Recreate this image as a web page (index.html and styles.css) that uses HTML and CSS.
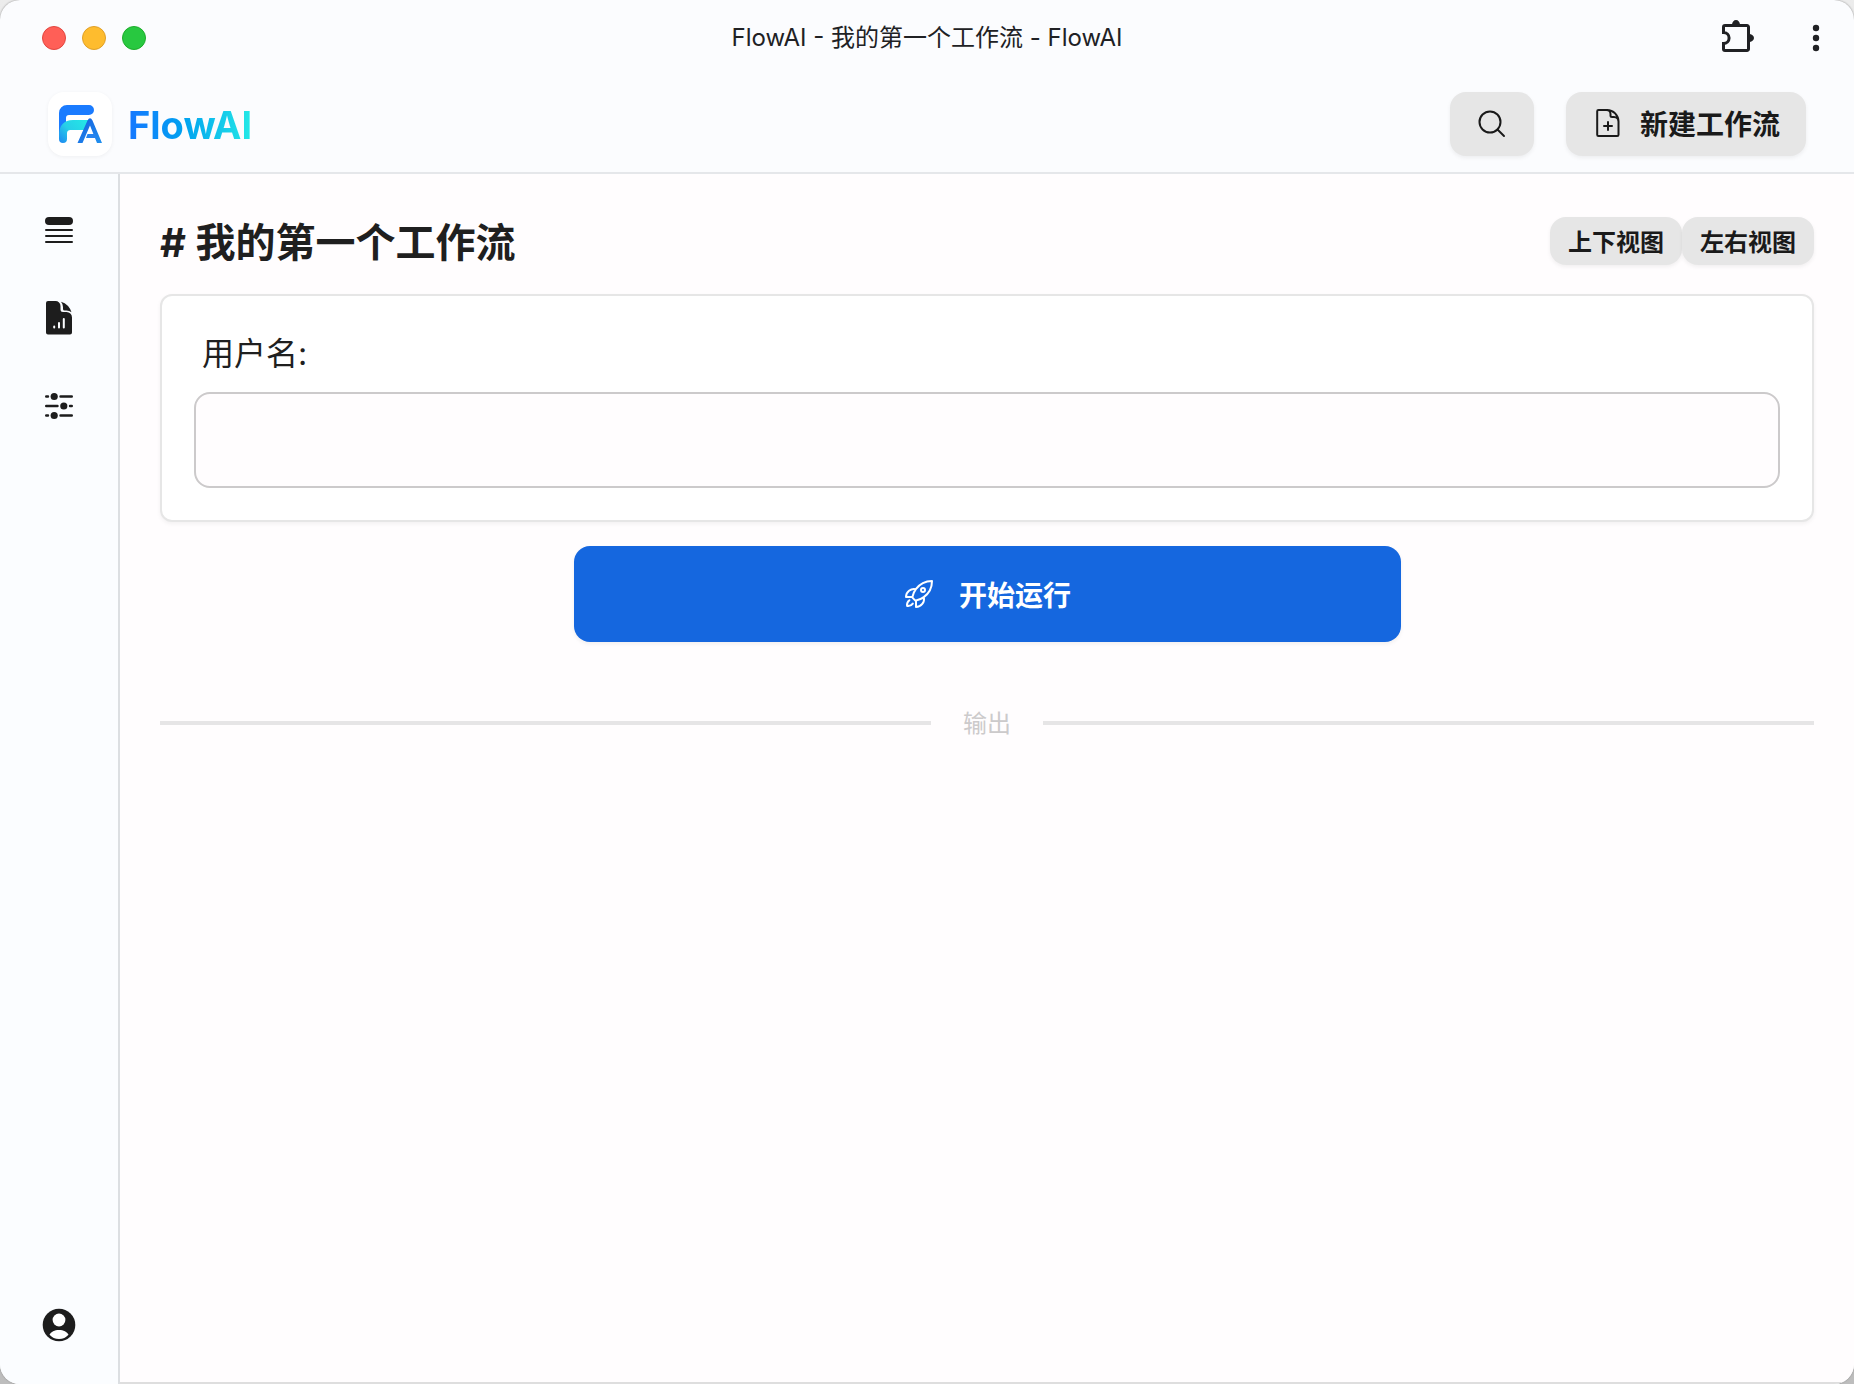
FILE: index.html
```html
<!DOCTYPE html>
<html lang="zh-CN">
<head>
<meta charset="utf-8">
<meta name="viewport" content="width=device-width, initial-scale=1">
<title>FlowAI - 我的第一个工作流 - FlowAI</title>
<link rel="stylesheet" href="styles.css">
</head>
<body>
<div class="window">
  <div class="titlebar">
    <div class="traffic">
      <button class="dot dot-close" type="button" aria-label="关闭"></button>
      <button class="dot dot-min" type="button" aria-label="最小化"></button>
      <button class="dot dot-max" type="button" aria-label="最大化"></button>
    </div>
    <div class="window-title">FlowAI - 我的第一个工作流 - FlowAI</div>
    <div class="window-tools">
      <button class="icon-btn" type="button" aria-label="扩展程序">
        <svg width="32" height="36" viewBox="0 0 32 36" fill="none">
          <path d="M1.500 12.400V7A1.500 1.500 0 0 1 3 5.500H25A1.500 1.500 0 0 1 26.500 7V29A1.500 1.500 0 0 1 25 30.500H3A1.500 1.500 0 0 1 1.500 29V23.600A5.600 5.600 0 0 0 1.500 12.400Z" stroke="#202124" stroke-width="3"/>
          <path d="M10 5a4 5 0 0 1 8 0zM27 14a5 4 0 0 1 0 8z" fill="#202124"/>
        </svg>
      </button>
      <button class="icon-btn" type="button" aria-label="更多">
        <svg width="8" height="28" viewBox="0 0 8 28" fill="#202124"><circle cx="4" cy="4" r="3.200"/><circle cx="4" cy="14" r="3.200"/><circle cx="4" cy="24" r="3.200"/></svg>
      </button>
    </div>
  </div>

  <header class="header">
    <a class="brand" href="#">
      <span class="logo">
        <svg width="44" height="38" viewBox="0 0 44 38" fill="none">
          <defs>
            <linearGradient id="cy" x1="24" y1="15" x2="0" y2="38" gradientUnits="userSpaceOnUse"><stop stop-color="#24e4e6"/><stop offset=".5" stop-color="#27cfe8"/><stop offset="1" stop-color="#1c86f2"/></linearGradient>
            <linearGradient id="leg" x1="20" y1="14" x2="42" y2="38" gradientUnits="userSpaceOnUse"><stop stop-color="#1560e0"/><stop offset="1" stop-color="#2190ee"/></linearGradient>
          </defs>
          <path d="M0 34V8a8 8 0 0 1 8-8H30a5 5 0 0 1 0 10H10a3 3 0 0 0-3 3V24z" fill="#1a7bff"/>
          <path d="M0 33V31C0 20 5 15 14 15H31L26 25H11.500C9 25 8 26.500 8 28.500V34a4 4 0 0 1-8 0z" fill="url(#cy)"/>
          <path d="M18.500 38L28.500 15.500Q31 11 33.500 15.500L43 38H38L31 20.500L23.500 38Z" fill="url(#leg)"/>
          <path d="M28.500 29H36L38 33H27Z" fill="#2583ef"/>
        </svg>
      </span>
      <span class="brand-name">FlowAI</span>
    </a>
    <div class="header-actions">
      <button class="btn btn-search" type="button" aria-label="搜索">
        <svg width="28" height="28" viewBox="0 0 28 28" fill="none" stroke="#1a1a1a" stroke-width="2" stroke-linecap="round"><circle cx="12" cy="12" r="10.500"/><path d="M19.500 19.500L26 26"/></svg>
      </button>
      <button class="btn btn-new" type="button">
        <svg width="24" height="28" viewBox="0 0 24 28" fill="none" stroke="#1a1a1a" stroke-width="2" stroke-linecap="round" stroke-linejoin="round"><path d="M22.500 15V12.500A4.500 4.500 0 0 0 18 8H16A1.500 1.500 0 0 1 14.500 6.500V5A4 4 0 0 0 10.500 1H2.500A1.300 1.300 0 0 0 1.200 2.300V25.700A1.300 1.300 0 0 0 2.500 27H21.200A1.300 1.300 0 0 0 22.500 25.700ZM11 1A11.500 11.500 0 0 1 22.500 12.500M12 13V21M8 17H16"/></svg>
        <span>新建工作流</span>
      </button>
    </div>
  </header>

  <div class="body">
    <nav class="sidebar" aria-label="主导航">
      <button class="icon-btn nav-btn" type="button" aria-label="工作流">
        <svg width="32" height="36" viewBox="0 0 32 36" fill="#1d1d1d"><rect x="2" y="5" width="28" height="8" rx="4"/><rect x="2" y="17" width="28" height="2" rx="1"/><rect x="2" y="23" width="28" height="2" rx="1"/><rect x="2" y="29" width="28" height="2" rx="1"/></svg>
      </button>
      <button class="icon-btn nav-btn" type="button" aria-label="报告">
        <svg width="32" height="36" viewBox="0 0 32 36"><path d="M5 1H12.500A5 5 0 0 1 17.500 6V9.500A2.500 2.500 0 0 0 20 12H23.500A5.500 5.500 0 0 1 29 17.500V32.500A2 2 0 0 1 27 34.500H5A2 2 0 0 1 3 32.500V3A2 2 0 0 1 5 1Z" fill="#1d1d1d"/><path d="M18 1.700A16 16 0 0 1 28.500 12.300A8 8 0 0 0 23.500 10.500H21.500A1.500 1.500 0 0 1 20 9V7A8 8 0 0 0 18 1.700Z" fill="#1d1d1d"/><path d="M11.200 26.500V27.500M16 23V27.500M20.800 19V27.500" stroke="#fbfdff" stroke-width="2" stroke-linecap="round"/></svg>
      </button>
      <button class="icon-btn nav-btn" type="button" aria-label="设置">
        <svg width="32" height="36" viewBox="0 0 32 36" fill="#1d1d1d" stroke="#1d1d1d" stroke-width="2.400" stroke-linecap="round"><path d="M3.200 8.500H5M17.500 8.500H28.800M3.200 18H14.500M27 18H28.800M3.200 27.500H5M17.500 27.500H28.800"/><g stroke="none"><circle cx="11.200" cy="8.500" r="3.600"/><circle cx="20.800" cy="18" r="3.600"/><circle cx="11.200" cy="27.500" r="3.600"/></g></svg>
      </button>
      <button class="icon-btn nav-btn nav-user" type="button" aria-label="账户">
        <svg width="34" height="34" viewBox="0 0 34 34"><circle cx="17" cy="17" r="16.300" fill="#1d1d1d"/><circle cx="17" cy="12" r="6.400" fill="#fff"/><path d="M7.500 26.700C9 24 12.500 22 17 22s8 2 9.500 4.700C24 29.500 21 31 17 31s-7-1.500-9.500-4.300z" fill="#fff"/></svg>
      </button>
    </nav>

    <main class="main">
      <div class="page-head">
        <h1 class="page-title"># 我的第一个工作流</h1>
        <div class="view-switch">
          <button class="btn btn-view" type="button">上下视图</button>
          <button class="btn btn-view" type="button">左右视图</button>
        </div>
      </div>

      <form class="form">
        <div class="card">
          <label class="field-label" for="username">用户名:</label>
          <input class="field-input" id="username" type="text">
        </div>
        <button class="run-btn" type="button">
          <svg width="32" height="32" viewBox="0 0 24 24" fill="none" stroke="#fff" stroke-width="1.500" stroke-linecap="round" stroke-linejoin="round"><path d="M15.590 14.370a6 6 0 0 1-5.840 7.380v-4.800m5.840-2.580a14.980 14.980 0 0 0 6.160-12.120A14.980 14.980 0 0 0 9.631 8.410m5.960 5.960a14.926 14.926 0 0 1-5.841 2.580m-.119-8.540a6 6 0 0 0-7.381 5.840h4.800m2.581-5.840a14.927 14.927 0 0 0-2.580 5.840m2.699 2.700c-.103.021-.207.041-.311.060a15.090 15.090 0 0 1-2.448-2.448 14.900 14.900 0 0 1 .060-.312m-2.240 2.390a4.493 4.493 0 0 0-1.757 4.306 4.493 4.493 0 0 0 4.306-1.758M16.500 9a1.500 1.500 0 1 1-3 0 1.500 1.500 0 0 1 3 0Z"/></svg>
          <span>开始运行</span>
        </button>
      </form>

      <div class="divider"><span>输出</span></div>
    </main>
  </div>
</div>
</body>
</html>
```
FILE: styles.css
```css
*,
*::before,
*::after {
  box-sizing: border-box;
}

body {
  margin: 0;
  background: linear-gradient(#ececec, #bdbdbd);
  color: #1f1f1f;
  font-family: Inter, "Noto Sans CJK SC", sans-serif;
  font-size: 24px;
}

button,
input {
  font: inherit;
  color: inherit;
}

button {
  border: 0;
  padding: 0;
  cursor: pointer;
}

svg {
  display: block;
  flex: none;
}

.window {
  display: flex;
  flex-direction: column;
  min-height: 100vh;
  overflow: hidden;
  border-radius: 20px;
  background: #fbfcfe;
  box-shadow: 0 0 2px #888;
}

/* Title bar */
.titlebar {
  display: grid;
  grid-template-columns: 1fr auto 1fr;
  align-items: center;
  height: 76px;
  padding: 0 34px 0 42px;
}

.traffic {
  display: flex;
  gap: 16px;
}

.dot {
  width: 24px;
  height: 24px;
  border: 1px solid;
  border-radius: 50%;
}

.dot-close {
  background: #ff5f57;
  border-color: #e2463f;
}

.dot-min {
  background: #febc2e;
  border-color: #e0a028;
}

.dot-max {
  background: #28c840;
  border-color: #1dad2b;
}

.window-title {
  padding-right: 8px;
  font-size: 24px;
  line-height: 32px;
  color: #202124;
}

.window-tools {
  display: flex;
  align-items: center;
  justify-content: flex-end;
  gap: 58px;
}

.icon-btn {
  background: none;
}

/* Header */
.header {
  display: flex;
  align-items: center;
  justify-content: space-between;
  height: 98px;
  padding: 0 48px;
  border-bottom: 2px solid #e5e7ea;
}

.brand {
  display: flex;
  align-items: center;
  gap: 16px;
  text-decoration: none;
}

.logo {
  display: grid;
  place-items: center;
  width: 64px;
  height: 64px;
  padding-left: 2px;
  border-radius: 16px;
  background: #fff;
  box-shadow: 0 1px 4px rgba(0, 0, 0, 0.05);
}

.brand-name {
  padding-top: 2px;
  font-size: 38px;
  font-weight: 700;
  line-height: 48px;
  color: transparent;
  background: linear-gradient(90deg, #1677ff, #00a2f0 45%, #24eae6);
  background-clip: text;
  -webkit-background-clip: text;
}

.header-actions {
  display: flex;
  gap: 32px;
}

.btn {
  display: flex;
  align-items: center;
  justify-content: center;
  border-radius: 16px;
  background: #e6e6e6;
  color: #1a1a1a;
  font-weight: 700;
  box-shadow: 0 2px 4px rgba(0, 0, 0, 0.06);
}

.btn-search {
  width: 84px;
  height: 64px;
}

.btn-new {
  gap: 20px;
  height: 64px;
  padding: 0 26px 2px 30px;
  font-size: 28px;
}

/* Body */
.body {
  display: flex;
  flex: 1;
}

.sidebar {
  display: flex;
  flex-direction: column;
  align-items: center;
  gap: 52px;
  width: 120px;
  padding: 38px 0 42px;
  border-right: 2px solid #dcdfe2;
  background: #fbfdff;
}

.nav-user {
  margin-top: auto;
}

.main {
  flex: 1;
  min-width: 0;
  padding: 40px;
  border-bottom: 2px solid #dedede;
  background: #fffdfe;
}

.page-head {
  display: flex;
  align-items: center;
  justify-content: space-between;
  height: 56px;
  padding-bottom: 2px;
}

.page-title {
  margin: 4px 0 0;
  font-size: 40px;
  font-weight: 700;
  line-height: 48px;
}

.view-switch {
  display: flex;
}

.btn-view {
  height: 48px;
  padding: 0 18px 2px;
  font-size: 24px;
}

.form {
  display: flex;
  flex-direction: column;
  align-items: center;
  gap: 24px;
  padding-top: 24px;
}

.card {
  display: flex;
  flex-direction: column;
  width: 100%;
  padding: 32px;
  border: 2px solid #e6e6e6;
  border-radius: 12px;
  background: #fff;
  box-shadow: 0 2px 4px rgba(0, 0, 0, 0.05);
}

.field-label {
  padding: 2px 8px 14px;
  font-size: 32px;
  line-height: 48px;
}

.field-input {
  width: 100%;
  height: 96px;
  padding: 0 24px;
  border: 2px solid #cccacb;
  border-radius: 16px;
  background: #fffdfe;
  font-size: 32px;
}

.run-btn {
  display: flex;
  align-items: center;
  justify-content: center;
  gap: 24px;
  width: 50%;
  height: 96px;
  border-radius: 16px;
  background: #1567df;
  color: #fff;
  font-size: 28px;
  font-weight: 700;
  box-shadow: 0 2px 4px rgba(0, 0, 0, 0.06);
}

.divider {
  display: flex;
  align-items: center;
  gap: 32px;
  margin-top: 64px;
  color: #cccacb;
  font-size: 24px;
  line-height: 32px;
}

.divider span {
  padding-top: 2px;
}

.divider::before,
.divider::after {
  content: "";
  flex: 1;
  height: 4px;
  background: #e6e5e6;
}
```
